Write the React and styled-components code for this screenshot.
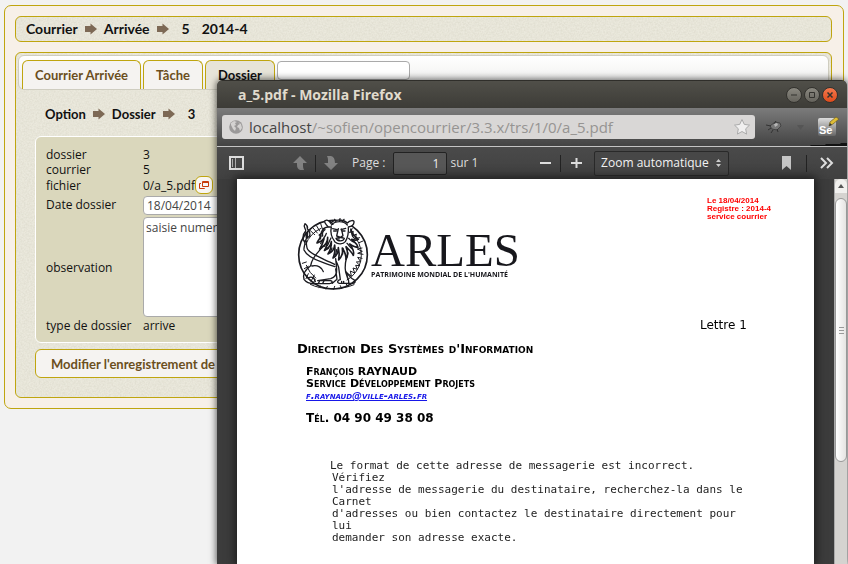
import React from 'react';
import styled, { createGlobalStyle, css } from 'styled-components';

const GlobalStyle = createGlobalStyle`
  * { box-sizing: border-box; }
  body { margin: 0; background: #f2f2f2; color: #111; overflow: hidden; }
  button, input, textarea, select { font: inherit; color: inherit; margin: 0; }
`;

const gold = '#bfa50f';
const ui = '"Open Sans", "Noto Sans", sans-serif';
const heading = 'Lato, "Open Sans", sans-serif';
const noise = encodeURIComponent(
  '<svg xmlns="http://www.w3.org/2000/svg" width="96" height="96"><filter id="n"><feTurbulence type="fractalNoise" baseFrequency=".6" numOctaves="2" stitchTiles="stitch"/><feColorMatrix values="0 0 0 0 .45  0 0 0 0 .43  0 0 0 0 .33  .35 0 0 0 -.1"/></filter><rect width="96" height="96" filter="url(#n)"/></svg>'
);
const grain = css`
  background-image: url("data:image/svg+xml,${noise}");
`;

const Desktop = styled.div`
  min-height: 100vh;
  padding: 5px 4px 0;
  font: 12px/16px ${ui};
`;
const Shell = styled.main`
  background: #f7f0e8;
  border: 1px solid ${gold};
  border-radius: 7px;
  padding: 10px 11px 10px 10px;
`;
const Crumbs = styled.nav`
  display: flex;
  align-items: center;
  gap: 6px;
  font: 700 13px/16px ${heading};
  padding: 0 10px;
  ${(p) => p.$boxed && css`
    height: 26px;
    border: 1px solid ${gold};
    border-radius: 6px;
    background-color: #ebe9dd;
    font-size: 14px;
    ${grain}
  `}
`;
const CrumbValue = styled.span`
  padding-left: 6px;
`;
const Section = styled.section`
  margin-top: 10px;
  border: 1px solid ${gold};
  border-radius: 6px;
  background-color: #ebe9dd;
  ${grain}
  padding: 2px 2px 19px;
`;
const Tabs = styled.div`
  display: flex;
  align-items: flex-end;
  gap: 2px;
  height: 35px;
  padding: 0 3px;
  border: 1px solid #cfcdc0;
  border-radius: 6px;
  background: linear-gradient(#fff, #ededeb);
`;
const Tab = styled.button`
  height: 29px;
  padding: 0 12px;
  border: 1px solid ${gold};
  border-bottom: 0;
  border-radius: 6px 6px 0 0;
  background: ${(p) => (p.$active ? '#e7e4d8' : '#f5f3f1')};
  color: ${(p) => (p.$active ? '#111' : '#6b4f1d')};
  font: 700 13px/16px ${heading};
`;
const Search = styled.input`
  align-self: flex-start;
  width: 133px;
  height: 19px;
  margin-top: 5px;
  border: 1px solid #aaa;
  border-radius: 4px;
  background: #fff;
`;
const Body = styled.div`
  padding: 16px 17px 0;
`;
const Fields = styled.form`
  display: grid;
  grid-template-columns: 97px 1fr;
  align-items: center;
  margin: 14px 0 6px;
  padding: 10px 10px 9px;
  border: 1px solid #fff;
  border-radius: 6px;
  background: #dad7bc;
`;
const FieldLabel = styled.label`
  line-height: 15px;
`;
const Value = styled.output`
  display: flex;
  align-items: center;
  height: ${(p) => (p.$tall ? '16px' : '15px')};
  line-height: 15px;
`;
const OpenButton = styled.button`
  display: grid;
  place-items: center;
  width: 18px;
  height: 18px;
  padding: 0;
  border: 1px solid ${gold};
  border-radius: 6px;
  background: #f8f6f3;
`;
const DateInput = styled.input`
  width: 80px;
  height: 19px;
  margin: 3px 0 1px;
  padding: 0 3px;
  border: 1px solid #aaa;
  border-radius: 4px;
  background: #fff;
  color: #444;
`;
const Notes = styled.textarea`
  display: block;
  width: 400px;
  height: 100px;
  margin: 1px 0;
  padding: 2px;
  border: 1px solid #aaa;
  border-radius: 4px;
  background: #fff;
  color: #444;
  resize: none;
`;
const Submit = styled.button`
  display: block;
  height: 29px;
  padding: 0 15px;
  border: 1px solid ${gold};
  border-radius: 6px;
  background: #f5f3f1;
  color: #6b4f1d;
  font: 700 13px/16px ${heading};
`;

const Window = styled.section`
  position: fixed;
  inset: 80px 1px 0 217px;
  display: flex;
  flex-direction: column;
  border-radius: 6px 6px 0 0;
  overflow: hidden;
  background: #3c3b37;
  font: 12px/16px ${ui};
`;
const WindowShadow = styled.div`
  position: fixed;
  inset: 80px 1px 0 217px;
  border-radius: 6px 6px 0 0;
  box-shadow: 0 0 7px 1px rgba(0, 0, 0, 0.6);
`;
const TitleBar = styled.header`
  display: flex;
  align-items: center;
  height: 28px;
  flex: none;
  padding: 0 9px 0 21px;
  gap: 2px;
  border-top: 1px solid #2f2e2a;
  background: linear-gradient(#504f49, #3d3c37);
`;
const Title = styled.h1`
  flex: 1;
  margin: 0;
  color: #e0dbcd;
  font: 700 14px/18px ${ui};
`;
const WindowButton = styled.button`
  display: grid;
  place-items: center;
  width: 16px;
  height: 16px;
  padding: 0;
  border: 1px solid #33322e;
  border-radius: 50%;
  background: ${(p) => (p.$close ? 'linear-gradient(#f4794e, #df4b1b)' : 'linear-gradient(#8a8880, #65635c)')};
`;
const AddressRow = styled.div`
  display: flex;
  align-items: center;
  height: 39px;
  flex: none;
  padding: 0 8px 0 5px;
  border-bottom: 1px solid #c4c4c4;
  background:
    linear-gradient(to bottom right, transparent 50%, #111 52%) right bottom / 45px 3px no-repeat,
    linear-gradient(#7b7b7b, #434343);
`;
const AddressBox = styled.div`
  display: flex;
  align-items: center;
  flex: 1;
  height: 24px;
  padding: 0 4px 0 7px;
  gap: 6px;
  border-radius: 3px;
  background: #d9d7d6;
  color: #969492;
  font: 15px/20px ${ui};
`;
const Url = styled.a`
  flex: 1;
  color: inherit;
  text-decoration: none;
  white-space: nowrap;
`;
const Host = styled.span`
  color: #454545;
`;
const Extensions = styled.div`
  display: flex;
  align-items: center;
  justify-content: space-between;
  width: 84px;
  padding-left: 10px;
`;
const Toolbar = styled.div`
  display: flex;
  align-items: center;
  height: 32px;
  flex: none;
  padding: 0 8px 0 11px;
  background: linear-gradient(#4a4a4a, #404040);
  color: #ddd;
`;
const ToolButton = styled.button`
  display: grid;
  place-items: center;
  width: ${(p) => (p.$wide ? '24px' : '16px')};
  height: 24px;
  margin-left: ${(p) => (p.$apart ? '48px' : '0')};
  padding: 0;
  border: 0;
  background: none;
`;
const Divider = styled.span`
  width: 1px;
  height: 17px;
  margin: ${(p) => (p.$loose ? '0 8px 0 12px' : '0 7px')};
  background: #222;
`;
const Spacer = styled.span`
  flex: ${(p) => p.$grow || 1};
`;
const PageLabel = styled.label`
  margin: 0 8px 0 13px;
`;
const PageInput = styled.input`
  width: 54px;
  height: 23px;
  margin-right: 3px;
  padding: 0 7px;
  border: 1px solid #222;
  border-radius: 2px;
  background: #575757;
  color: #eee;
  text-align: right;
`;
const ZoomBox = styled.div`
  display: flex;
  align-items: center;
  width: 135px;
  height: 25px;
  margin-left: 10px;
  padding-right: 7px;
  border: 1px solid #292929;
  border-radius: 2px;
  background: #474747;
`;
const ZoomSelect = styled.select`
  flex: 1;
  padding: 0 6px;
  border: 0;
  background: none;
  appearance: none;
  color: #f3f3f3;
`;
const Viewer = styled.div`
  display: flex;
  flex: 1;
  min-height: 0;
  padding-left: 20px;
  background: #3c3c3c;
`;
const Sheet = styled.article`
  flex: 1;
  background: #fff;
  color: #000;
  box-shadow: 0 0 9px 2px #1c1c1c;
  font-family: "DejaVu Sans", sans-serif;
  padding: 18px 0 0 60px;
`;
const SheetTop = styled.div`
  display: flex;
  justify-content: space-between;
  height: 98px;
`;
const Logo = styled.div`
  display: flex;
  padding-top: 19px;
`;
const LogoText = styled.div`
  padding: 13px 0 0 2px;
  color: #17171c;
`;
const LogoName = styled.div`
  font: 47px/42px "Liberation Serif", serif;
`;
const LogoTag = styled.div`
  font: 700 7px/8px ${ui};
  white-space: nowrap;
`;
const Stamp = styled.address`
  width: 107px;
  color: #f00;
  font: 700 8px/8px "Liberation Sans", sans-serif;
`;
const Letter = styled.p`
  width: 114px;
  margin: 22px 0 0 auto;
  font-size: 12px;
  line-height: 16px;
`;
const Department = styled.h2`
  margin: 8px 0 9px;
  font-size: 13px;
  line-height: 16px;
  font-variant: small-caps;
`;
const Contact = styled.div`
  padding-left: 9px;
  font-size: 11px;
  line-height: 12px;
  font-weight: 700;
  font-variant: small-caps;
`;
const Line = styled.div`
  height: 12px;
`;
const Phone = styled.div`
  margin-top: 10px;
  font-size: 12px;
`;
const Mail = styled.a`
  display: block;
  height: 12px;
  color: #1717e8;
  font-size: 10px;
  font-style: italic;
`;
const Message = styled.p`
  margin: 36px 0 0 35px;
  font: 11px/12px "DejaVu Sans Mono", monospace;
  color: #222;
`;
const MessageLine = styled.span`
  display: block;
  text-indent: ${(p) => (p.$first ? '-2px' : '0')};
`;
const Gutter = styled.div`
  width: 20px;
`;
const ScrollTrack = styled.div`
  display: flex;
  flex-direction: column;
  width: 13px;
  background: #d5d3d0;
  border-left: 1px solid #aaa;
`;
const ScrollUp = styled.button`
  display: grid;
  place-items: center;
  height: 14px;
  padding: 0;
  border: 0;
  border-radius: 6px 6px 0 0;
  background: #f1f0ee;
`;
const Thumb = styled.div`
  display: grid;
  place-items: center;
  height: 264px;
  margin-top: 5px;
  border: 1px solid #999;
  border-radius: 6px;
  background: linear-gradient(90deg, #fff, #e6e4e2);
`;

const Arrow = () => (
  <svg width="14" height="12" viewBox="0 0 14 12" aria-hidden="true">
    <path d="M1 3h5.500V.5L13 6l-6.500 5.500V9H1z" fill="#7d6955" />
  </svg>
);

const Globe = () => (
  <svg width="14" height="14" viewBox="0 0 14 14" aria-hidden="true">
    <circle cx="7" cy="7" r="6.800" fill="#9b9999" />
    <path d="M2 3l3-2 3 1-2 1 1 2-2 1 2 2-1 3-2-2-2-4zM9 2l3 2 1 4-2 3-1-3-2-1 1-2 2-1z" fill="#d4d2d1" />
  </svg>
);

const Lion = () => (
  <svg width="72" height="76" viewBox="8 16 216 228" fill="none" stroke="#1b1b20" strokeLinecap="round" strokeLinejoin="round" aria-hidden="true">
    <circle cx="116" cy="132" r="103" strokeWidth="5" />
    <path d="M80 53A86 86 0 0 0 34 102M186 84a86 86 0 0 1-28 124M36 164a86 86 0 0 0 28 38" strokeWidth="3" />
    <path d="M57 53l12 14M67 46l9 15M79 39l5 15M48 60l13 12M174 54l-9 12 12-4-3 15 12-7-3 14 13-3M194 96l12-5M203 112l-14 3 15 7-14 6 16 3M203 143l-13-3 9 13-13 1 11 11-13-1 5 12-13-4 5 15-13-6 3 15-13-9 1 15M24 158l12-4M30 174l12-7" strokeWidth="3" />
    <path d="M102 49C94 42 87 31 94 29c6-2 13 3 15 9 8-12 36-14 50-1 7-9 22-10 20-2-1 9-10 13-17 14 1 14-1 31-9 44-7 8-22 9-31 1-9-12-15-28-11-45z" fill="#fff" strokeWidth="4" />
    <path d="M111 43c12-13 36-14 48 0M115 54l13 3M140 57l14-4M118 61h8M144 61h8M132 54l-5 22 12 4 7-5-5-20M125 83c8-3 18-3 25 0-3 10-20 10-25 0zM134 79v6M108 32l8 9M121 26l4 8M137 24l-2 9M149 26l-5 8" strokeWidth="4" />
    <path d="M100 49c-25 4-12 20-25 24 14 0-5 15-7 24 9-4 18-7 21-13-5 17-8 24-13 31 15-9 25-20 24-35 0 17-2 28-9 38 14-6 19-17 20-25 1 15-4 27-10 37 13-5 19-17 20-27 2 14 0 28-5 39 11-6 16-20 16-31 3 13 3 27 1 37 9-9 13-23 11-36 8 13 12 22 11 34 7-9 6-22 0-38 11 11 18 17 22 26 4-10-3-23-11-34 12 8 18 10 25 10-2-12-12-15-19-24 8 3 15 3 20 0-11-9-20-16-22-29" strokeWidth="5" />
    <path d="M92 57c-7 4-9 10-7 19M82 68c-6 4-6 10-3 17M96 68c-3 12-13 18-17 31M110 82c-6 11-8 18-11 23M170 55c3 14 0 22 12 29M163 83c7 7 10 11 18 12M158 98c7 7 9 13 15 16M80 108l12-2M90 120l12-7M108 125l5-13M124 132l3-15M145 130l1-17" strokeWidth="4" />
    <path d="M83 111c-15 17-31 31-34 54-18 13-24 28-20 41 8 11 20 14 34 13h42c9-1 12-8 3-9H70l39-6c15-5 19-14 18-29l-3-31M161 127c-7 19-11 37-7 57 4 15 11 25 9 34h-28c-8-2-6-9 3-11l-5-37-9-22M124 175l4 31-14 12M155 183c8 10 14 20 24 24 6 5 4 11-5 11h-13M53 166c17-4 31 5 34 17M43 201c10-5 18 1 20 12M142 212v6M148 212v6M89 211l-4 7M75 213l-3 5" strokeWidth="4" />
    <path d="M32 39c-8 12 4 14 2 22-10 11-10 27-3 34 2-10 7-12 14-18 4-8 1-16-6-23 3-7-1-10-7-15zM31 91c3 12-4 19-2 27 9 20 34 30 58 38 12 5 22 7 35 12M36 91c0 13 0 19 4 25 12 16 31 20 50 31 12 6 21 9 31 14M35 67l1 16M40 63l-1 17" strokeWidth="4" />
    <path d="M50 212l10-19M57 218l5-12M35 204l7-15M48 221c32 17 94 18 131 1M74 230l5-4M95 235l4-8M118 236l3-9M142 234l-4-9M161 228l-5-7" strokeWidth="3" />
  </svg>
);

const contact = ['François RAYNAUD', 'Service Développement Projets'];
const message = [
  'Le format de cette adresse de messagerie est incorrect.',
  'Vérifiez',
  "l'adresse de messagerie du destinataire, recherchez-la dans le",
  'Carnet',
  "d'adresses ou bien contactez le destinataire directement pour",
  'lui',
  'demander son adresse exacte.',
];

function CourrierPage() {
  return (
    <Desktop>
      <Shell>
        <Crumbs $boxed>
          <span>Courrier</span><Arrow /><span>Arrivée</span><Arrow />
          <CrumbValue>5</CrumbValue><CrumbValue>2014-4</CrumbValue>
        </Crumbs>
        <Section>
          <Tabs>
            <Tab>Courrier Arrivée</Tab>
            <Tab>Tâche</Tab>
            <Tab $active>Dossier</Tab>
            <Search aria-label="Recherche" />
          </Tabs>
          <Body>
            <Crumbs>
              <span>Option</span><Arrow /><span>Dossier</span><Arrow /><CrumbValue>3</CrumbValue>
            </Crumbs>
            <Fields id="dossier-form">
              <FieldLabel htmlFor="dossier">dossier</FieldLabel><Value id="dossier">3</Value>
              <FieldLabel htmlFor="courrier">courrier</FieldLabel><Value id="courrier">5</Value>
              <FieldLabel htmlFor="fichier">fichier</FieldLabel>
              <Value id="fichier" $tall>
                0/a_5.pdf
                <OpenButton type="button" aria-label="Ouvrir le fichier">
                  <svg width="10" height="10" viewBox="0 0 10 10" fill="none" stroke="#c83c0a" aria-hidden="true">
                    <path d="M3.500 1.500h6v5h-6zM3.500 2.500h6M2 3.500H.5v5h5V8" />
                  </svg>
                </OpenButton>
              </Value>
              <FieldLabel htmlFor="date">Date dossier</FieldLabel><DateInput id="date" defaultValue="18/04/2014" />
              <FieldLabel htmlFor="notes">observation</FieldLabel><Notes id="notes" defaultValue="saisie numerique" />
              <FieldLabel htmlFor="type">type de dossier</FieldLabel><Value id="type">arrive</Value>
            </Fields>
            <Submit type="submit" form="dossier-form">Modifier l'enregistrement de la table</Submit>
          </Body>
        </Section>
      </Shell>
    </Desktop>
  );
}

export default function App() {
  return (
    <>
      <GlobalStyle />
      <CourrierPage />
      <WindowShadow />
      <Window>
        <TitleBar>
          <Title>a_5.pdf - Mozilla Firefox</Title>
          <WindowButton aria-label="Réduire"><svg width="8" height="8" stroke="#33322e"><path d="M1 4h6" /></svg></WindowButton>
          <WindowButton aria-label="Agrandir"><svg width="8" height="8" fill="none" stroke="#33322e"><path d="M1.500 1.500h5v5h-5z" /></svg></WindowButton>
          <WindowButton $close aria-label="Fermer"><svg width="8" height="8" stroke="#33322e" strokeWidth="1.500"><path d="M1.500 1.500l5 5m0-5l-5 5" /></svg></WindowButton>
        </TitleBar>
        <AddressRow>
          <AddressBox>
            <Globe />
            <Url href="#"><Host>localhost</Host>/~sofien/opencourrier/3.3.x/trs/1/0/a_5.pdf</Url>
            <svg width="18" height="18" viewBox="0 0 18 18" aria-hidden="true">
              <path d="M9 1.500l2.300 4.900 5.200.700-3.800 3.700.900 5.300L9 13.500l-4.600 2.600.900-5.300L1.500 7.100l5.200-.7z" fill="#f0efef" stroke="#aaa" />
            </svg>
          </AddressBox>
          <Extensions>
            <svg width="18" height="14" viewBox="0 0 18 14" aria-hidden="true">
              <path d="M5 6l5-4 5 1 1 3-4 4-5-1z" fill="#777" stroke="#444" />
              <path d="M1 5l5 1M3 10l3-2M8 10l-2 3M11 1L9 4M12 9l1 3" stroke="#333" />
              <path d="M9 4l3-1 1 2-3 2z" fill="#b6b6b6" />
            </svg>
            <svg width="7" height="5" aria-hidden="true"><path d="M0 0h7L3.500 5z" fill="#555" /></svg>
            <svg width="22" height="22" viewBox="0 0 22 22" aria-hidden="true">
              <defs><linearGradient id="se" x2="0" y2="1"><stop stopColor="#ddd" /><stop offset="1" stopColor="#666" /></linearGradient></defs>
              <rect x="1" y="2" width="18" height="18" rx="2" fill="url(#se)" />
              <text x="2" y="18" fontFamily="Liberation Sans" fontSize="11" fontWeight="700" fill="#fff">Se</text>
              <path d="M12 10l1-4 6-5 3 2-6 5z" fill="#dfbd35" stroke="#6b5c25" strokeWidth=".7" />
              <path d="M12 10l1-3 2 2z" fill="#333" />
            </svg>
          </Extensions>
        </AddressRow>
        <Toolbar>
          <ToolButton aria-label="Panneau latéral">
            <svg width="15" height="14" fill="none"><path d="M1 1h13v12H1z" stroke="#ddd" strokeWidth="2" /><path d="M3.500 3v8M6.500 2v10" stroke="#aaa" /></svg>
          </ToolButton>
          <ToolButton $apart aria-label="Page précédente">
            <svg width="14" height="14"><path d="M0 7l7-7 7 7h-4v3q0 2 1 4H7q-3-1-3-5V7z" fill="#828282" /></svg>
          </ToolButton>
          <Divider />
          <ToolButton aria-label="Page suivante">
            <svg width="14" height="14"><path d="M3 0h4q4 1 4 7h3l-7 7-7-7h4V4q0-2-1-4z" fill="#828282" /></svg>
          </ToolButton>
          <PageLabel htmlFor="page">Page :</PageLabel>
          <PageInput id="page" defaultValue="1" />
          <span>sur 1</span>
          <Spacer $grow={6} />
          <ToolButton aria-label="Zoom arrière"><svg width="11" height="12"><path d="M0 6h11" stroke="#ddd" strokeWidth="2" /></svg></ToolButton>
          <Divider />
          <ToolButton aria-label="Zoom avant"><svg width="11" height="12"><path d="M0 6h11M5.500 1v10" stroke="#ddd" strokeWidth="2" /></svg></ToolButton>
          <ZoomBox>
            <ZoomSelect aria-label="Zoom"><option>Zoom automatique</option></ZoomSelect>
            <svg width="5" height="8" fill="#ccc" aria-hidden="true"><path d="M0 3l2.500-3L5 3zM0 5h5L2.500 8z" /></svg>
          </ZoomBox>
          <Spacer $grow={5} />
          <ToolButton aria-label="Signet"><svg width="9" height="14"><path d="M0 0h9v14L4.500 10 0 14z" fill="#c5c5c5" /></svg></ToolButton>
          <Divider $loose />
          <ToolButton $wide aria-label="Outils"><svg width="14" height="12" fill="none" stroke="#ddd" strokeWidth="2"><path d="M1 1l5 5-5 5M7 1l5 5-5 5" /></svg></ToolButton>
        </Toolbar>
        <Viewer>
          <Sheet>
            <SheetTop>
              <Logo>
                <Lion />
                <LogoText><LogoName>ARLES</LogoName><LogoTag>PATRIMOINE MONDIAL DE L'HUMANITÉ</LogoTag></LogoText>
              </Logo>
              <Stamp>Le 18/04/2014<br />Registre : 2014-4<br />service courrier</Stamp>
            </SheetTop>
            <Letter>Lettre 1</Letter>
            <Department>Direction Des Systèmes d'Information</Department>
            <Contact>
              {contact.map((line) => <Line key={line}>{line}</Line>)}
              <Mail href="mailto:f.raynaud@ville-arles.fr">f.raynaud@ville-arles.fr</Mail>
              <Phone>Tél. 04 90 49 38 08</Phone>
            </Contact>
            <Message>{message.map((line, i) => <MessageLine key={line} $first={i === 0}>{line}</MessageLine>)}</Message>
          </Sheet>
          <Gutter />
          <ScrollTrack>
            <ScrollUp aria-label="Défiler vers le haut"><svg width="6" height="4"><path d="M0 4l3-4 3 4z" fill="#555" /></svg></ScrollUp>
            <Thumb><svg width="5" height="7" stroke="#999"><path d="M0 .5h5M0 3.500h5M0 6.500h5" /></svg></Thumb>
          </ScrollTrack>
        </Viewer>
      </Window>
    </>
  );
}
